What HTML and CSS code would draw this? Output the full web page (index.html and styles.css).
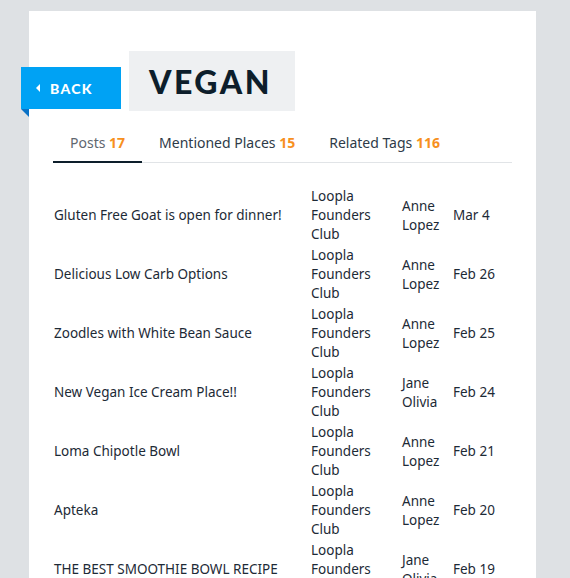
FILE: index.html
```html
<!DOCTYPE html>
<html>
<head>
<meta charset="utf-8">
<link rel="stylesheet" href="styles.css">
</head>
<body>
<div class="card">
  <div class="header">
    <a class="back"><span class="arrow"></span>BACK</a>
    <h1 class="title">VEGAN</h1>
  </div>
  <div class="tabs">
    <div class="tab active">Posts <b>17</b></div>
    <div class="tab">Mentioned Places <b>15</b></div>
    <div class="tab">Related Tags <b>116</b></div>
  </div>
  <table class="posts">
    <colgroup><col class="c1"><col class="c2"><col class="c3"><col class="c4"></colgroup>
    <tr><td>Gluten Free Goat is open for dinner!</td><td>Loopla Founders Club</td><td>Anne Lopez</td><td>Mar 4</td></tr>
    <tr><td>Delicious Low Carb Options</td><td>Loopla Founders Club</td><td>Anne Lopez</td><td>Feb 26</td></tr>
    <tr><td>Zoodles with White Bean Sauce</td><td>Loopla Founders Club</td><td>Anne Lopez</td><td>Feb 25</td></tr>
    <tr><td>New Vegan Ice Cream Place!!</td><td>Loopla Founders Club</td><td>Jane Olivia</td><td>Feb 24</td></tr>
    <tr><td>Loma Chipotle Bowl</td><td>Loopla Founders Club</td><td>Anne Lopez</td><td>Feb 21</td></tr>
    <tr><td>Apteka</td><td>Loopla Founders Club</td><td>Anne Lopez</td><td>Feb 20</td></tr>
    <tr><td>THE BEST SMOOTHIE BOWL RECIPE</td><td>Loopla Founders Club</td><td>Jane Olivia</td><td>Feb 19</td></tr>
  </table>
</div>
</body>
</html>
```
FILE: styles.css
```css
html, body {
  margin: 0;
  padding: 0;
  background: #dee1e4;
  font-family: "Noto Sans", Lato, sans-serif;
  overflow: hidden;
}
.card {
  margin: 11px 0 0 29px;
  width: 507px;
  height: 700px;
  background: #ffffff;
  padding-top: 40px;
  box-sizing: border-box;
}
.header {
  display: flex;
  align-items: flex-start;
  margin-left: -8px;
}
.back {
  position: relative;
  display: flex;
  align-items: center;
  width: 100px;
  height: 42px;
  margin-top: 16px;
  margin-right: 8px;
  box-sizing: border-box;
  padding-left: 15px;
  background: #00a2f4;
  color: #ffffff;
  font-family: Lato, sans-serif;
  font-weight: 900;
  font-size: 14px;
  letter-spacing: 1.3px;
}
.back::after {
  content: "";
  position: absolute;
  left: 0;
  top: 42px;
  border-top: 8px solid #0a72c6;
  border-left: 8px solid transparent;
}
.arrow {
  width: 0;
  height: 0;
  border-top: 4px solid transparent;
  border-bottom: 4px solid transparent;
  border-right: 4px solid #ffffff;
  margin-right: 10px;
}
.title {
  margin: 0;
  height: 60px;
  box-sizing: border-box;
  padding: 0 23px 0 20px;
  display: flex;
  align-items: center;
  background: #eef0f2;
  color: #0d1e2b;
  font-family: Lato, sans-serif;
  font-weight: 900;
  font-size: 32px;
  letter-spacing: 2.5px;
}
.tabs {
  display: flex;
  margin: 12px 24px 0 24px;
  border-bottom: 1px solid #e1e4e7;
}
.tab {
  padding: 10px 17px 8px 17px;
  font-size: 14px;
  line-height: 20px;
  color: #2e3b48;
  border-bottom: 2px solid transparent;
  margin-bottom: -1px;
}
.tab b {
  color: #f7901e;
  font-weight: 700;
}
.tab.active {
  color: #5f6770;
  border-bottom-color: #0d1e2b;
}
.posts {
  margin: 23px 24px 0 24px;
  width: 459px;
  table-layout: fixed;
  border-collapse: collapse;
  font-size: 13.5px;
  line-height: 19px;
  color: #1d2a36;
}
.posts td {
  padding: 1px 0 1px 1px;
  vertical-align: middle;
}
.c1 { width: 257px; }
.c2 { width: 91px; }
.c3 { width: 51px; }
.c4 { width: 60px; }
.posts td:nth-child(2) { padding-right: 12px; }
.posts td:nth-child(3) { padding-right: 4px; }
```
